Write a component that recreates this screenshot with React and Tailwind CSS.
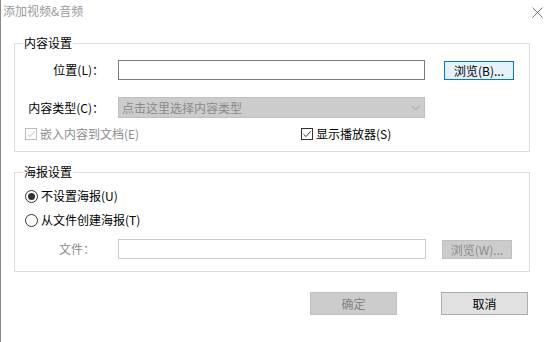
import React from 'react';

const font = { fontFamily: '"Microsoft YaHei", "Noto Sans CJK SC", "Noto Sans", sans-serif' };

const Checkbox = ({ checked, disabled }) => (
  <span
    className={`flex items-center justify-center w-[12px] h-[12px] border bg-white ${
      disabled ? 'border-[#bcbcbc]' : 'border-[#333333]'
    }`}
  >
    {checked && (
      <svg width="10" height="10" viewBox="0 0 10 10">
        <path
          d="M1.5 5.2 L4 7.6 L8.6 2.4"
          fill="none"
          stroke={disabled ? '#bcbcbc' : '#333333'}
          strokeWidth="1"
        />
      </svg>
    )}
  </span>
);

const Radio = ({ checked }) => (
  <span className="flex items-center justify-center w-[13px] h-[13px] rounded-full border border-[#333333] bg-white">
    {checked && <span className="w-[7px] h-[7px] rounded-full bg-[#333333]" />}
  </span>
);

const Group = ({ title, children, className }) => (
  <fieldset className={`ml-[13px] w-[516px] border border-[#dcdcdc] ${className}`}>
    <legend className="ml-[8px] px-px text-[12px] leading-[14px] text-black">{title}</legend>
    {children}
  </fieldset>
);

export default function App() {
  return (
    <div className="w-[552px] h-[342px] bg-white border-l border-[#888888] text-[12px] text-black" style={font}>
      <div className="h-[36px] flex justify-between items-start">
        <span className="ml-[2px] mt-[4px] leading-[14px] text-[#9a9a9a]">添加视频&amp;音频</span>
        <svg className="mt-[7px] mr-[9px]" width="11" height="11" viewBox="0 0 11 11">
          <path d="M0.5 0.5 L10.5 10.5 M10.5 0.5 L0.5 10.5" stroke="#777777" strokeWidth="1" />
        </svg>
      </div>

      <Group title="内容设置" className="h-[116px]">
        <div className="flex items-center mt-[10px]">
          <span className="w-[89px] text-right leading-[20px]">位置(L)：</span>
          <div className="ml-[14px] w-[307px] h-[20px] border border-[#7a7a7a] bg-white" />
          <button className="ml-[19px] w-[70px] h-[19px] border border-[#0078d7] bg-[#e5f1fb] text-[12px] leading-[17px] text-black">
            浏览(B)...
          </button>
        </div>
        <div className="flex items-center mt-[17px]">
          <span className="w-[89px] text-right leading-[21px]">内容类型(C)：</span>
          <div className="ml-[14px] w-[307px] h-[21px] border border-[#bfbfbf] bg-[#cccccc] flex items-center justify-between pl-[3px] pr-[4px]">
            <span className="text-[#8a8a8a] leading-[19px]">点击这里选择内容类型</span>
            <svg width="9" height="6" viewBox="0 0 9 6">
              <path d="M0.5 0.8 L4.5 4.8 L8.5 0.8" fill="none" stroke="#a0a0a0" strokeWidth="1" />
            </svg>
          </div>
        </div>
        <div className="flex items-center mt-[9px]">
          <div className="ml-[10px] w-[276px] flex items-center gap-[3px] text-[#8d8d8d]">
            <Checkbox checked disabled />
            <span className="leading-[14px]">嵌入内容到文档(E)</span>
          </div>
          <div className="flex items-center gap-[3px]">
            <Checkbox checked />
            <span className="leading-[14px]">显示播放器(S)</span>
          </div>
        </div>
      </Group>

      <Group title="海报设置" className="mt-[13px] h-[107px]">
        <div className="ml-[10px] mt-[10px] flex items-center gap-[3px]">
          <Radio checked />
          <span className="leading-[14px]">不设置海报(U)</span>
        </div>
        <div className="ml-[10px] mt-[10px] flex items-center gap-[3px]">
          <Radio />
          <span className="leading-[14px]">从文件创建海报(T)</span>
        </div>
        <div className="flex items-center mt-[12px]">
          <span className="w-[89px] pl-[44px] leading-[20px] text-[#8d8d8d]">文件：</span>
          <div className="ml-[14px] w-[308px] h-[20px] border border-[#cccccc] bg-white" />
          <button className="ml-[16px] w-[70px] h-[19px] border border-[#bfbfbf] bg-[#cccccc] text-[12px] leading-[17px] text-[#8d8d8d]">
            浏览(W)...
          </button>
        </div>
      </Group>

      <div className="flex justify-end mt-[20px] mr-[24px] gap-[44px]">
        <button className="w-[87px] h-[23px] border border-[#bfbfbf] bg-[#cccccc] text-[12px] text-[#838383]">确定</button>
        <button className="w-[87px] h-[23px] border border-[#adadad] bg-[#e1e1e1] text-[12px] text-black">取消</button>
      </div>
    </div>
  );
}
